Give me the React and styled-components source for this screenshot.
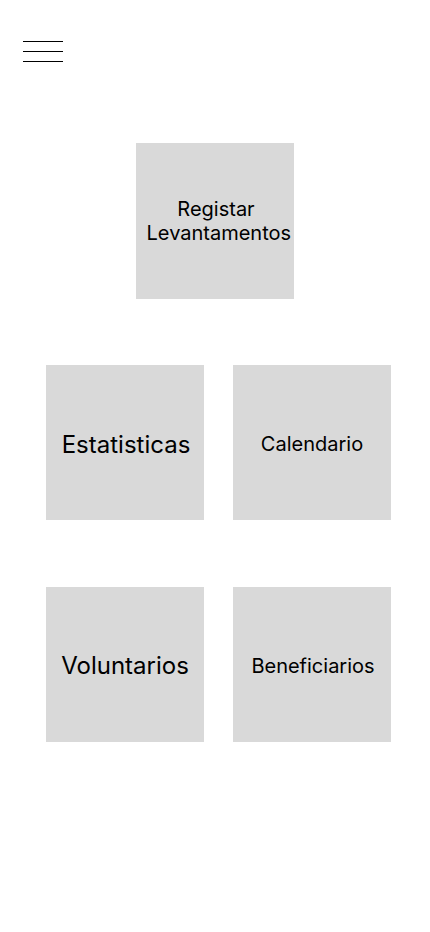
import React from "react";
import styled, { createGlobalStyle } from "styled-components";

const Global = createGlobalStyle`
  html, body { margin: 0; padding: 0; background: #ffffff; }
  body { font-family: Inter, "Noto Sans", sans-serif; color: #000; }
`;

const Page = styled.div`
  width: 430px;
  min-height: 932px;
  background: #ffffff;
  display: flex;
  flex-direction: column;
`;

const Header = styled.header`
  padding: 41px 0 0 23px;
`;

const MenuButton = styled.button`
  width: 40px;
  height: 21px;
  padding: 0;
  border: 0;
  background: transparent;
  display: flex;
  flex-direction: column;
  justify-content: space-between;
  cursor: pointer;
`;

const MenuLine = styled.span`
  display: block;
  width: 40px;
  height: 1px;
  background: #000;
`;

const Tile = styled.button`
  width: 158px;
  height: ${(p) => p.$h || 155}px;
  border: 0;
  padding: ${(p) => p.$drop || 0}px 0 0 ${(p) => p.$shift || 0}px;
  background: #d9d9d9;
  display: flex;
  align-items: center;
  justify-content: center;
  text-align: center;
  font-family: Inter, "Noto Sans", sans-serif;
  font-size: ${(p) => p.$size}px;
  line-height: 1.21;
  color: #000;
  white-space: pre-line;
  cursor: pointer;
`;

const TopRow = styled.div`
  margin-top: 81px;
  display: flex;
  justify-content: center;
`;

const Grid = styled.div`
  margin-top: 66px;
  padding-left: 46px;
  display: grid;
  grid-template-columns: 158px 158px;
  column-gap: 29px;
  row-gap: 67px;
`;

function MenuIcon() {
  return (
    <MenuButton aria-label="Menu">
      <MenuLine />
      <MenuLine />
      <MenuLine />
    </MenuButton>
  );
}

export default function App() {
  return (
    <>
      <Global />
      <Page>
        <Header>
          <MenuIcon />
        </Header>
        <TopRow>
          <Tile $size={20} $h={156} $shift={2}>
            {"Registar\n\u00a0Levantamentos"}
          </Tile>
        </TopRow>
        <Grid>
          <Tile $size={24} $shift={2} $drop={4}>Estatisticas</Tile>
          <Tile $size={20} $drop={4}>Calendario</Tile>
          <Tile $size={24} $drop={2}>Voluntarios</Tile>
          <Tile $size={20} $shift={2} $drop={4}>Beneficiarios</Tile>
        </Grid>
      </Page>
    </>
  );
}
